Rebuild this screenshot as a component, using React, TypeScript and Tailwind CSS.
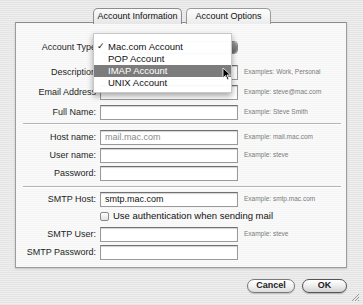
import React from "react";

const Field = ({
	label,
	value,
	muted,
	example,
	className = "",
}: {
	label: string;
	value?: string;
	muted?: boolean;
	example?: string;
	className?: string;
}) => {
	return (
		<div className={`flex items-center h-[18px] ${className}`}>
			<div className="w-[80px] text-right text-[9px] text-[#1e1e1e] leading-none">
				{label}
			</div>
			<div className="ml-[4px] w-[138px] h-[15px] bg-white border border-[#9a9a9a] border-t-[#707070] shadow-[inset_0_1px_1px_rgba(0,0,0,0.18)] flex items-center px-[4px]">
				<span
					className={`text-[9px] leading-none ${muted ? "text-[#8a8a8a]" : "text-[#111]"}`}
				>
					{value}
				</span>
			</div>
			{example && (
				<span className="ml-[6px] text-[6.5px] text-[#7a7a7a] leading-none whitespace-nowrap">
					{example}
				</span>
			)}
		</div>
	);
};

const Separator = ({ className = "" }: { className?: string }) => (
	<div className={`h-[6px] flex items-center ${className}`}>
		<div className="ml-[7px] mr-[5px] flex-1 border-t border-[#b4b4b4] border-b-white border-b h-[2px]" />
	</div>
);

const App = () => {
	return (
		<div className="relative w-[363px] h-[305px] overflow-hidden font-['Liberation_Sans',Arial,sans-serif] bg-[repeating-linear-gradient(180deg,#e4e4e4_0px,#e4e4e4_1px,#eeeeee_1px,#eeeeee_2px)]">
			{/* tabs */}
			<div className="relative z-10 flex gap-[4px] ml-[93px] pt-[8px]">
				<div className="w-[89px] h-[16px] rounded-t-[5px] border border-b-0 border-[#8c8c8c] bg-gradient-to-b from-[#fbfbfb] to-[#e6e6e6] flex items-center justify-center text-[9px] text-[#111]">
					Account Information
				</div>
				<div className="w-[85px] h-[16px] rounded-t-[5px] border border-b-0 border-[#9a9a9a] bg-gradient-to-b from-[#fdfdfd] to-[#ececec] flex items-center justify-center text-[9px] text-[#111]">
					Account Options
				</div>
			</div>

			{/* panel */}
			<div className="ml-[15px] -mt-[2px] w-[332px] h-[246px] border border-[#9c9c9c] border-t-[#8a8a8a] bg-[repeating-linear-gradient(180deg,#f5f5f5_0px,#f5f5f5_1px,#fafafa_1px,#fafafa_2px)] shadow-[0_1px_2px_rgba(0,0,0,0.15)] flex flex-col pt-[15px]">
				{/* account type popup */}
				<div className="flex items-center h-[18px]">
					<div className="w-[80px] text-right text-[9px] text-[#1e1e1e] leading-none">
						Account Type
					</div>
					<div className="ml-[4px] w-[138px] h-[13px] rounded-[4px] border border-[#8a8a8a] bg-gradient-to-b from-white to-[#e4e4e4] flex justify-end">
						<div className="w-[7px] h-full rounded-r-[4px] bg-gradient-to-b from-[#9a9a9a] to-[#6a6a6a]" />
					</div>
				</div>
				<Field
					className="mt-[7px]"
					label="Description"
					example="Examples: Work, Personal"
				/>
				<Field
					className="mt-[2px]"
					label="Email Address"
					example="Example: steve@mac.com"
				/>
				<Field
					className="mt-[2px]"
					label="Full Name:"
					example="Example: Steve Smith"
				/>
				<Separator />
				<Field
					className="mt-[1px]"
					label="Host name:"
					value="mail.mac.com"
					muted
					example="Example: mail.mac.com"
				/>
				<Field label="User name:" example="Example: steve" />
				<Field label="Password:" />
				<Separator className="mt-[2px]" />
				<Field label="SMTP Host:" value="smtp.mac.com" example="Example: smtp.mac.com" />
				<div className="flex items-center h-[16px] ml-[84px]">
					<div className="w-[9px] h-[9px] rounded-[2px] border border-[#8a8a8a] bg-gradient-to-b from-white to-[#e2e2e2]" />
					<span className="ml-[4px] text-[9.5px] text-[#111] leading-none">
						Use authentication when sending mail
					</span>
				</div>
				<Field className="mt-[1px]" label="SMTP User:" example="Example: steve" />
				<Field label="SMTP Password:" />
			</div>

			{/* buttons */}
			<div className="flex gap-[7px] ml-[247px] mt-[11px]">
				<div className="w-[48px] h-[14px] rounded-full border border-[#7a7a7a] bg-gradient-to-b from-white via-[#f2f2f2] to-[#dcdcdc] shadow-[0_1px_1px_rgba(0,0,0,0.2)] flex items-center justify-center text-[9px] font-bold text-[#222]">
					Cancel
				</div>
				<div className="w-[45px] h-[14px] rounded-full border border-[#555] bg-gradient-to-b from-white via-[#ededed] to-[#d2d2d2] shadow-[0_1px_1px_rgba(0,0,0,0.25)] flex items-center justify-center text-[9px] font-bold text-[#222]">
					OK
				</div>
			</div>

			{/* resize grip */}
			<svg className="absolute right-[3px] bottom-[3px]" width="10" height="10" viewBox="0 0 10 10">
				<path d="M9 2 L2 9 M9 5 L5 9 M9 8 L8 9" stroke="#9a9a9a" strokeWidth="1" />
			</svg>

			{/* open popup menu */}
			<div className="absolute left-[93px] top-[33px] w-[139px] h-[60px] bg-white/95 border border-[#c8c8c8] shadow-[0_3px_6px_rgba(0,0,0,0.35)] pt-[7px] pb-[4px] text-[9.5px] text-[#111]">
				<div className="h-[12px] flex items-center">
					<span className="w-[14px] text-center text-[9px]">✓</span>
					<span>Mac.com Account</span>
				</div>
				<div className="h-[12px] flex items-center pl-[14px]">POP Account</div>
				<div className="h-[12px] flex items-center pl-[14px] bg-[#7c7c7c] text-white">
					IMAP Account
				</div>
				<div className="h-[12px] flex items-center pl-[14px]">UNIX Account</div>
			</div>

			{/* cursor */}
			<svg className="absolute left-[222px] top-[67px]" width="10" height="14" viewBox="0 0 10 14">
				<path d="M1 1 L1 11 L3.5 8.5 L5.5 13 L7 12.3 L5 8 L8.5 8 Z" fill="#000" stroke="#fff" strokeWidth="0.8" />
			</svg>
		</div>
	);
};

export default App;
